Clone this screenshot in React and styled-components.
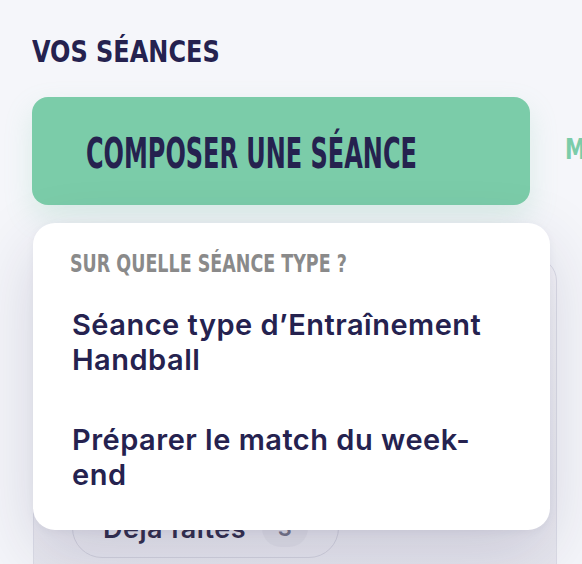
import React from 'react';
import styled, { createGlobalStyle } from 'styled-components';

const navy = '#25224f';
const green = '#7bcca9';

const GlobalStyle = createGlobalStyle`
  html, body {
    margin: 0;
    padding: 0;
    background: #f5f6fa;
    overflow: hidden;
  }
  body {
    font-family: Inter, "Noto Sans", sans-serif;
    color: ${navy};
  }
`;

const Page = styled.main`
  padding: 32px 0 0 32px;
  width: 650px;
`;

// condensed display type used for titles and labels
const Display = styled.span`
  display: inline-block;
  font-family: "Liberation Sans Narrow", "DejaVu Sans Condensed", sans-serif;
  font-weight: 700;
  text-transform: uppercase;
  white-space: nowrap;
  transform: scaleX(${(p) => p.$squeeze || 1});
  transform-origin: left;
`;

const Title = styled.h1`
  margin: 0;
  font-size: 31px;
  line-height: 38px;
  color: ${navy};
`;

const Actions = styled.div`
  position: relative;
  margin-top: 27px;
  display: flex;
  align-items: center;
  gap: 35px;
`;

const ComposeButton = styled.button`
  width: 498px;
  height: 108px;
  padding: 4px 0 0 54px;
  border: 0;
  border-radius: 16px;
  background: ${green};
  color: ${navy};
  font-size: 43px;
  display: flex;
  align-items: center;
  justify-content: flex-start;
  box-shadow: 0 12px 28px rgba(123, 204, 169, 0.22);
  cursor: pointer;
`;

const TabLink = styled.a`
  font-size: 29px;
  color: ${green};
  margin-top: -6px;
`;

const Menu = styled.div`
  position: absolute;
  top: 126px;
  left: 1px;
  width: 517px;
  height: 307px;
  box-sizing: border-box;
  padding: 28px 45px 0 37px;
  background: #fff;
  border-radius: 22px;
  box-shadow: 0 24px 70px rgba(37, 34, 79, 0.16), 0 2px 8px rgba(37, 34, 79, 0.05);
  z-index: 2;
`;

const MenuHeading = styled.div`
  font-size: 24px;
  line-height: 26px;
  color: #8a8a8a;
`;

const MenuList = styled.ul`
  list-style: none;
  margin: 30px 0 0;
  padding: 0 0 0 2px;
  display: flex;
  flex-direction: column;
  gap: 45px;
`;

const MenuItem = styled.li`
  font-family: Inter, sans-serif;
  font-weight: 600;
  font-size: 29px;
  line-height: 35px;
  letter-spacing: 0.5px;
  color: ${navy};
  cursor: pointer;
`;

const SessionsCard = styled.section`
  margin: 52px 0 0 1px;
  width: 524px;
  height: 340px;
  box-sizing: border-box;
  padding: 30px 38px 38px;
  border: 1.5px solid #dcdde7;
  border-radius: 24px;
  background: linear-gradient(#f6f6fa, #e6e6ee);
  display: flex;
  flex-direction: column;
  justify-content: flex-end;
`;

const FilterRow = styled.div`
  display: flex;
  gap: 14px;
`;

const FilterPill = styled.div`
  height: 60px;
  box-sizing: border-box;
  padding: 0 30px;
  border: 1.5px solid #d2d2de;
  border-radius: 30px;
  display: flex;
  align-items: center;
  gap: 16px;
  font-size: 27px;
  font-weight: 600;
  letter-spacing: 0.5px;
  color: #33304f;
`;

const Count = styled.span`
  min-width: 46px;
  height: 38px;
  border-radius: 19px;
  background: #e1e1e9;
  color: #77778a;
  font-size: 22px;
  display: flex;
  align-items: center;
  justify-content: center;
`;

const templates = [
  'Séance type d’Entraînement Handball',
  'Préparer le match du week-end',
];

export default function App() {
  return (
    <Page>
      <GlobalStyle />
      <Title>
        <Display $squeeze={0.86}>Vos séances</Display>
      </Title>

      <Actions>
        <ComposeButton>
          <Display $squeeze={0.62}>Composer une séance</Display>
        </ComposeButton>
        <TabLink>
          <Display $squeeze={0.8}>Mes modèles</Display>
        </TabLink>

        <Menu>
          <MenuHeading>
            <Display $squeeze={0.81}>Sur quelle séance type ?</Display>
          </MenuHeading>
          <MenuList>
            {templates.map((t) => (
              <MenuItem key={t}>{t}</MenuItem>
            ))}
          </MenuList>
        </Menu>
      </Actions>

      <SessionsCard>
        <FilterRow>
          <FilterPill>
            Déjà faites <Count>3</Count>
          </FilterPill>
        </FilterRow>
      </SessionsCard>
    </Page>
  );
}
